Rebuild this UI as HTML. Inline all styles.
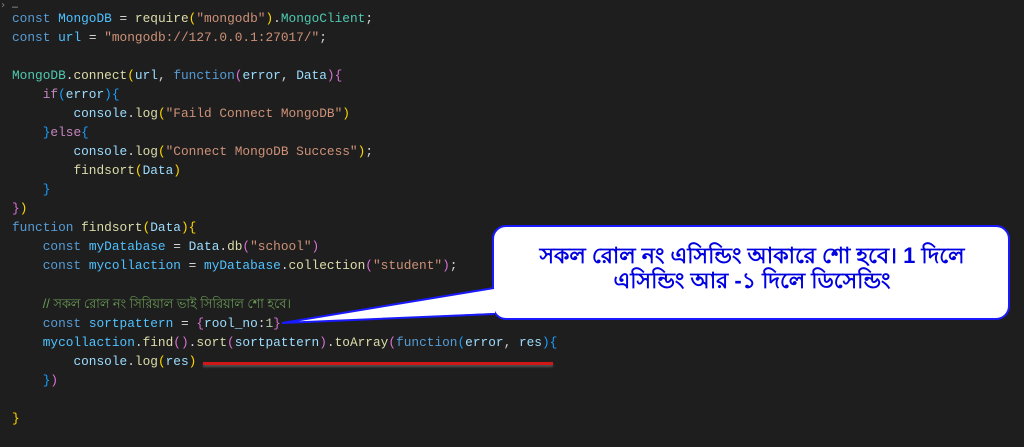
<!DOCTYPE html>
<html><head><meta charset="utf-8"><style>
body{margin:0;width:1024px;height:447px;background:#1e1e1e;overflow:hidden;position:relative}
pre{margin:0;position:absolute;left:12px;top:9px;font-family:"Liberation Mono",monospace;font-size:12.8px;line-height:19px;color:#d4d4d4}
.k{color:#569cd6}.v{color:#4fc1ff}.f{color:#dcdcaa}.s{color:#ce9178}.p{color:#9cdcfe}
.y{color:#ffd700}.m{color:#da70d6}.b{color:#179fff}.c{color:#c586c0}.g{color:#6a9955;font-family:"Liberation Sans",sans-serif}
.t{color:#4ec9b0}
.bub{position:absolute;left:492px;top:225px;width:518px;height:95px;background:#fff;border:2px solid #1a1aff;border-radius:14px;box-sizing:border-box}
.txt{position:absolute;left:492px;top:243px;width:520px;text-align:center;color:#0000e0;font:bold 22px/25px "Liberation Sans",sans-serif}
</style></head><body>
<div style="position:absolute;left:0;top:0;color:#888;font:10px monospace">› …</div>
<pre><span class="k">const</span> <span class="v">MongoDB</span> = <span class="f">require</span><span class="y">(</span><span class="s">"mongodb"</span><span class="y">)</span>.<span class="t">MongoClient</span>;
<span class="k">const</span> <span class="v">url</span> = <span class="s">"mongodb://127.0.0.1:27017/"</span>;

<span class="t">MongoDB</span>.<span class="f">connect</span><span class="y">(</span><span class="p">url</span>, <span class="k">function</span><span class="m">(</span><span class="p">error</span>, <span class="p">Data</span><span class="m">){</span>
    <span class="c">if</span><span class="b">(</span><span class="p">error</span><span class="b">){</span>
        <span class="p">console</span>.<span class="f">log</span><span class="y">(</span><span class="s">"Faild Connect MongoDB"</span><span class="y">)</span>
    <span class="b">}</span><span class="c">else</span><span class="b">{</span>
        <span class="p">console</span>.<span class="f">log</span><span class="y">(</span><span class="s">"Connect MongoDB Success"</span><span class="y">)</span>;
        <span class="f">findsort</span><span class="y">(</span><span class="p">Data</span><span class="y">)</span>
    <span class="b">}</span>
<span class="m">}</span><span class="y">)</span>
<span class="k">function</span> <span class="f">findsort</span><span class="y">(</span><span class="p">Data</span><span class="y">){</span>
    <span class="k">const</span> <span class="v">myDatabase</span> = <span class="p">Data</span>.<span class="f">db</span><span class="m">(</span><span class="s">"school"</span><span class="m">)</span>
    <span class="k">const</span> <span class="v">mycollaction</span> = <span class="v">myDatabase</span>.<span class="f">collection</span><span class="m">(</span><span class="s">"student"</span><span class="m">)</span>;

    <span class="g">// সকল রোল নং সিরিয়াল ভাই সিরিয়াল শো হবে।</span>
    <span class="k">const</span> <span class="v">sortpattern</span> = <span class="m">{</span><span class="p">rool_no</span>:<span class="s" style="color:#b5cea8">1</span><span class="m">}</span>
    <span class="v">mycollaction</span>.<span class="f">find</span><span class="m">()</span>.<span class="f">sort</span><span class="m">(</span><span class="p">sortpattern</span><span class="m">)</span>.<span class="f">toArray</span><span class="m">(</span><span class="k">function</span><span class="b">(</span><span class="p">error</span>, <span class="p">res</span><span class="b">){</span>
        <span class="p">console</span>.<span class="f">log</span><span class="y">(</span><span class="p">res</span><span class="y">)</span>
    <span class="b">}</span><span class="m">)</span>

<span class="y">}</span></pre>
<div style="position:absolute;left:203px;top:362px;width:350px;height:3px;background:#d01818;box-shadow:0 2px 2px #555"></div>
<div class="bub"></div>
<svg style="position:absolute;left:0;top:0" width="1024" height="447"><polygon points="495,288 282,323 495,313" fill="#fff"/><polyline points="494,288 282,323 494,314" fill="none" stroke="#1a1aff" stroke-width="2"/></svg>
<div class="txt">সকল রোল নং এসিন্ডিং আকারে শো হবে। 1 দিলে<br>এসিন্ডিং আর -১ দিলে ডিসেন্ডিং</div>
</body></html>
